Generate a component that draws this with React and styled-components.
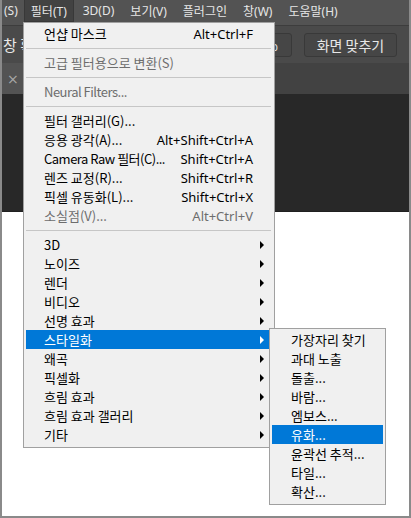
import React from "react";
import styled, { createGlobalStyle } from "styled-components";

const GlobalStyle = createGlobalStyle`
  body {
    margin: 0;
    background: #fff;
    font-family: "Noto Sans", "Noto Sans CJK KR", sans-serif;
  }
`;

const Frame = styled.div`
  position: relative;
  width: 411px;
  height: 518px;
  box-sizing: border-box;
  border: 2px solid #8a8a8a;
  border-top: none;
  display: flex;
  flex-direction: column;
  overflow: hidden;
  background: #fff;
`;

const MenuBar = styled.div`
  height: 26px;
  flex: none;
  box-sizing: border-box;
  background: #535353;
  border-bottom: 1px solid #3d3d3d;
  display: flex;
  align-items: stretch;
  gap: 2px;
  margin-left: -2px;
  font-family: "Noto Sans", "Noto Sans CJK KR", sans-serif;
  font-size: 12px;
  color: #e6e6e6;
`;

const BarItem = styled.div`
  display: flex;
  align-items: center;
  padding: 0 ${(p) => p.$pad || 6}px;
  height: 22px;
  box-sizing: border-box;
  background: ${(p) => (p.$open ? "#424242" : "transparent")};
  border: 1px solid ${(p) => (p.$open ? "#383838" : "transparent")};
  border-top: none;
`;

const OptionsBar = styled.div`
  height: 37px;
  flex: none;
  background: #4a4a4a;
  display: flex;
  align-items: center;
  font-family: "Noto Sans CJK KR", sans-serif;
  color: #e8e8e8;
  font-size: 15px;
`;

const OptionLabel = styled.span`
  flex: none;
  margin-left: 1px;
  width: 247px;
  white-space: nowrap;
`;

const OptButton = styled.div`
  height: 24px;
  box-sizing: border-box;
  border: 1px solid #393939;
  border-radius: 3px;
  background: #464646;
  display: flex;
  align-items: center;
  justify-content: ${(p) => (p.$end ? "flex-end" : "center")};
  padding-right: ${(p) => (p.$end ? 13 : 0)}px;
  width: ${(p) => p.$w}px;
  margin-left: ${(p) => p.$ml || 0}px;
  flex: none;
  font-size: 14px;
  color: #e8e8e8;
  white-space: nowrap;
`;

const TabBar = styled.div`
  height: 31px;
  flex: none;
  background: #424242;
  display: flex;
`;

const Tab = styled.div`
  width: 120px;
  background: #535353;
  display: flex;
  align-items: center;
  padding-left: 5px;
  color: #a8a8a8;
  font-size: 14px;
  font-family: "DejaVu Sans", sans-serif;
`;

const Pasteboard = styled.div`
  height: 117px;
  flex: none;
  background: #282828;
  border-bottom: 1px solid #202020;
`;

const Canvas = styled.div`
  flex: 1;
  background: #fff;
`;

const Menu = styled.div`
  position: absolute;
  left: ${(p) => p.$x}px;
  top: ${(p) => p.$y}px;
  width: ${(p) => p.$w}px;
  box-sizing: border-box;
  background: #f0f0f0;
  border: 1px solid #a0a0a0;
  padding: 1px 2px 3px 2px;
  font-size: 13px;
  color: #000;
`;

const Row = styled.div`
  height: 19px;
  display: flex;
  align-items: center;
  padding-left: ${(p) => p.$indent}px;
  padding-right: ${(p) => p.$right || 19}px;
  background: ${(p) => (p.$active ? "#0078d7" : "transparent")};
  color: ${(p) => (p.$active ? "#fff" : p.$disabled ? "#6d6d6d" : "#000")};
  white-space: nowrap;
`;

const Label = styled.span`
  flex: 1;
  font-family: "Noto Sans CJK KR", sans-serif;
  letter-spacing: ${(p) => (p.$narrow ? "-0.5px" : "normal")};
`;

const Shortcut = styled.span`
  font-family: "Noto Sans", sans-serif;
  font-size: 13px;
`;

const Arrow = styled.span`
  width: 0;
  height: 0;
  border-top: 4px solid transparent;
  border-bottom: 4px solid transparent;
  border-left: 4px solid ${(p) => (p.$active ? "#fff" : "#000")};
  margin-right: -11px;
`;

const Separator = styled.div`
  height: 10px;
  position: relative;
  &::after {
    content: "";
    position: absolute;
    left: 0;
    right: 1px;
    top: 5px;
    border-top: 1px solid #c6c6c6;
  }
`;

const filterItems = [
  { label: "언샵 마스크", key: "Alt+Ctrl+F" },
  "sep",
  { label: "고급 필터용으로 변환(S)", disabled: true },
  "sep",
  { label: "Neural Filters...", disabled: true, narrow: true },
  "sep",
  { label: "필터 갤러리(G)..." },
  { label: "응용 광각(A)...", key: "Alt+Shift+Ctrl+A" },
  { label: "Camera Raw 필터(C)...", key: "Shift+Ctrl+A", narrow: true },
  { label: "렌즈 교정(R)...", key: "Shift+Ctrl+R" },
  { label: "픽셀 유동화(L)...", key: "Shift+Ctrl+X" },
  { label: "소실점(V)...", key: "Alt+Ctrl+V", disabled: true },
  "sep",
  { label: "3D", sub: true },
  { label: "노이즈", sub: true },
  { label: "렌더", sub: true },
  { label: "비디오", sub: true },
  { label: "선명 효과", sub: true },
  { label: "스타일화", sub: true, active: true },
  { label: "왜곡", sub: true },
  { label: "픽셀화", sub: true },
  { label: "흐림 효과", sub: true },
  { label: "흐림 효과 갤러리", sub: true },
  { label: "기타", sub: true },
];

const stylizeItems = [
  "가장자리 찾기",
  "과대 노출",
  "돌출...",
  "바람...",
  "엠보스...",
  "유화...",
  "윤곽선 추적...",
  "타일...",
  "확산...",
];

export default function App() {
  return (
    <>
      <GlobalStyle />
      <Frame>
        <MenuBar>
          <BarItem $pad={3}>(S)</BarItem>
          <BarItem $open>필터(T)</BarItem>
          <BarItem>3D(D)</BarItem>
          <BarItem>보기(V)</BarItem>
          <BarItem>플러그인</BarItem>
          <BarItem>창(W)</BarItem>
          <BarItem>도움말(H)</BarItem>
        </MenuBar>
        <OptionsBar>
          <OptionLabel>창 확대</OptionLabel>
          <OptButton $w={42} $end>
            100%
          </OptButton>
          <OptButton $w={93} $ml={12}>
            화면 맞추기
          </OptButton>
          <OptButton $w={80} $ml={12} />
        </OptionsBar>
        <TabBar>
          <Tab>×</Tab>
        </TabBar>
        <Pasteboard />
        <Canvas />

        <Menu $x={21} $y={22} $w={252}>
          {filterItems.map((item, i) =>
            item === "sep" ? (
              <Separator key={i} />
            ) : (
              <Row
                key={i}
                $indent={18}
                $active={item.active}
                $disabled={item.disabled}
              >
                <Label $narrow={item.narrow}>{item.label}</Label>
                {item.key && <Shortcut>{item.key}</Shortcut>}
                {item.sub && <Arrow $active={item.active} />}
              </Row>
            )
          )}
        </Menu>

        <Menu $x={267} $y={328} $w={117}>
          {stylizeItems.map((label, i) => (
            <Row key={label} $indent={19} $right={4} $active={i === 5}>
              <Label>{label}</Label>
            </Row>
          ))}
        </Menu>
      </Frame>
    </>
  );
}
